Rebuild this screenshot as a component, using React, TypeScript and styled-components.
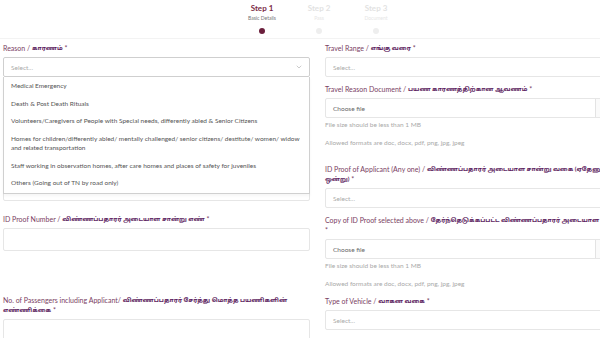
import React from 'react';
import styled, { createGlobalStyle, css } from 'styled-components';
import { ChevronDown } from 'lucide-react';

const GlobalStyle = createGlobalStyle`
  html, body {
    margin: 0;
    padding: 0;
    background: #ffffff;
    overflow: hidden;
  }
  body {
    font-family: Lato, "Noto Sans", "Noto Sans Tamil", sans-serif;
  }
`;

const Page = styled.div`
  width: 632px;
  padding: 0 3px;
`;

const Stepper = styled.div`
  display: flex;
  justify-content: center;
  gap: 2px;
  height: 36px;
  border-bottom: 1px solid #f3f3f3;
  margin: 0 -3px;
  padding-top: 2px;
`;

const Step = styled.div`
  width: 55px;
  display: flex;
  flex-direction: column;
  align-items: center;
`;

const StepTitle = styled.div<{ active?: boolean }>`
  font-size: 8px;
  font-weight: 700;
  line-height: 12px;
  color: ${({ active }) => (active ? '#7a2b45' : '#e2e2e2')};
`;

const StepSub = styled.div<{ active?: boolean }>`
  font-size: 5px;
  line-height: 8px;
  color: ${({ active }) => (active ? '#777777' : '#e6e6e6')};
`;

const StepDot = styled.div<{ active?: boolean }>`
  margin-top: 6px;
  width: 6px;
  height: 6px;
  border-radius: 50%;
  background: ${({ active }) => (active ? '#6b1f3c' : '#eeeeee')};
`;

const Form = styled.div`
  display: grid;
  grid-template-columns: 307px 307px;
  column-gap: 15px;
  padding-top: 4px;
`;

const Column = styled.div`
  display: flex;
  flex-direction: column;
`;

const Field = styled.div`
  position: relative;
  display: flex;
  flex-direction: column;
  margin-bottom: 7px;
`;

const Label = styled.div`
  font-size: 7px;
  line-height: 10px;
  color: #7a3e63;
  margin-bottom: 4px;
`;

const NoWrap = styled.span`
  white-space: nowrap;
`;

const Tamil = styled.span`
  color: #5e1f62;
  font-weight: 700;
  font-size: 6.1px;
  line-height: 10px;
  vertical-align: top;
`;

const Box = styled.div<{ open?: boolean; tall?: number }>`
  box-sizing: border-box;
  height: ${({ tall }) => (tall ? `${tall}px` : '20px')};
  border: 1px solid ${({ open }) => (open ? '#cfcfcf' : '#e6e6e6')};
  border-radius: 2px;
  display: flex;
  align-items: center;
  justify-content: space-between;
  padding-left: 7px;
  font-size: 6.5px;
  color: #aaaaaa;
  background: #ffffff;
`;

const Caret = styled.span`
  display: flex;
  align-items: center;
  padding-right: 6px;
  color: #999999;
`;

const FileBox = styled(Box)`
  padding-right: 0;
  color: #666666;
`;

const Browse = styled.div`
  align-self: stretch;
  width: 35px;
  border-left: 1px solid #e3e3e3;
  background: #fafafa;
`;

const Hints = styled.div<{ last?: boolean }>`
  display: flex;
  flex-direction: column;
  gap: 8px;
  margin-top: 2px;
  ${({ last }) =>
    !last &&
    css`
      margin-bottom: 9px;
    `}
`;

const Hint = styled.div`
  font-size: 6.5px;
  line-height: 10px;
  color: #a9a9a9;
`;

const Menu = styled.div`
  position: absolute;
  top: 34px;
  left: 0;
  right: 0;
  z-index: 5;
  background: #ffffff;
  border: 1px solid #d0d0d0;
  border-top: none;
  box-shadow: 0 2px 3px rgba(0, 0, 0, 0.04);
  padding: 0 0 1px;
`;

const Option = styled.div`
  padding: 4px 7px;
  font-size: 6.5px;
  line-height: 9.5px;
  color: #555555;
`;

const Spacer = styled.div<{ h: number }>`
  height: ${({ h }) => h}px;
`;

const reasons = [
  'Medical Emergency',
  'Death & Post Death Rituals',
  'Volunteers/Caregivers of People with Special needs, differently abled & Senior Citizens',
  'Homes for children/differently abled/ mentally challenged/ senior citizens/ destitute/ women/ widow and related transportation',
  'Staff working in observation homes, after care homes and places of safety for juveniles',
  'Others (Going out of TN by road only)',
];

const SelectBox = ({ open }: { open?: boolean }) => (
  <Box open={open}>
    Select...
    {open && (
      <Caret>
        <ChevronDown size={8} strokeWidth={1.5} />
      </Caret>
    )}
  </Box>
);

const FileField = ({ label, last }: { label: React.ReactNode; last?: boolean }) => (
  <Field>
    <Label>{label}</Label>
    <FileBox>
      Choose file
      <Browse />
    </FileBox>
    <Hints last={last}>
      <Hint>File size should be less than 1 MB</Hint>
      <Hint>Allowed formats are doc, docx, pdf, png, jpg, jpeg</Hint>
    </Hints>
  </Field>
);

export default function App() {
  return (
    <Page>
      <GlobalStyle />
      <Stepper>
        <Step>
          <StepTitle active>Step 1</StepTitle>
          <StepSub active>Basic Details</StepSub>
          <StepDot active />
        </Step>
        <Step>
          <StepTitle>Step 2</StepTitle>
          <StepSub>Pass</StepSub>
          <StepDot />
        </Step>
        <Step>
          <StepTitle>Step 3</StepTitle>
          <StepSub>Document</StepSub>
          <StepDot />
        </Step>
      </Stepper>

      <Form>
        <Column>
          <Field>
            <Label>
              Reason / <Tamil>காரணம்</Tamil> *
            </Label>
            <SelectBox open />
            <Menu>
              {reasons.map((r) => (
                <Option key={r}>{r}</Option>
              ))}
            </Menu>
          </Field>
          <Field>
            <Label>&nbsp;</Label>
            <Box tall={103} />
          </Field>
          <Spacer h={6} />
          <Field>
            <Label>
              ID Proof Number / <Tamil>விண்ணப்பதாரர் அடையாள சான்று எண்</Tamil> *
            </Label>
            <Box tall={23} />
          </Field>
          <Spacer h={37} />
          <Field>
            <Label>
              No. of Passengers including Applicant/ <Tamil>விண்ணப்பதாரர் சேர்த்து மொத்த பயணிகளின் எண்ணிக்கை</Tamil> *
            </Label>
            <Box tall={23} />
          </Field>
        </Column>

        <Column>
          <Field>
            <Label>
              Travel Range / <Tamil>எங்கு வரை</Tamil> *
            </Label>
            <SelectBox />
          </Field>
          <FileField
            label={
              <>
                Travel Reason Document / <Tamil>பயண காரணத்திற்கான ஆவணம்</Tamil> *
              </>
            }
          />
          <Field>
            <Label>
              ID Proof of Applicant (Any one) / <Tamil>விண்ணப்பதாரர் அடையாள சான்று வகை (ஏதேனும் ஒன்று)</Tamil> *
            </Label>
            <SelectBox />
          </Field>
          <FileField
            last
            label={
              <>
                <NoWrap>
                  Copy of ID Proof selected above / <Tamil>தேர்ந்தெடுக்கப்பட்ட விண்ணப்பதாரர் அடையாள சான்றின் நகல்</Tamil>
                </NoWrap>{' '}
                *
              </>
            }
          />
          <Field>
            <Label>
              Type of Vehicle / <Tamil>வாகன வகை</Tamil> *
            </Label>
            <SelectBox />
          </Field>
        </Column>
      </Form>
    </Page>
  );
}
